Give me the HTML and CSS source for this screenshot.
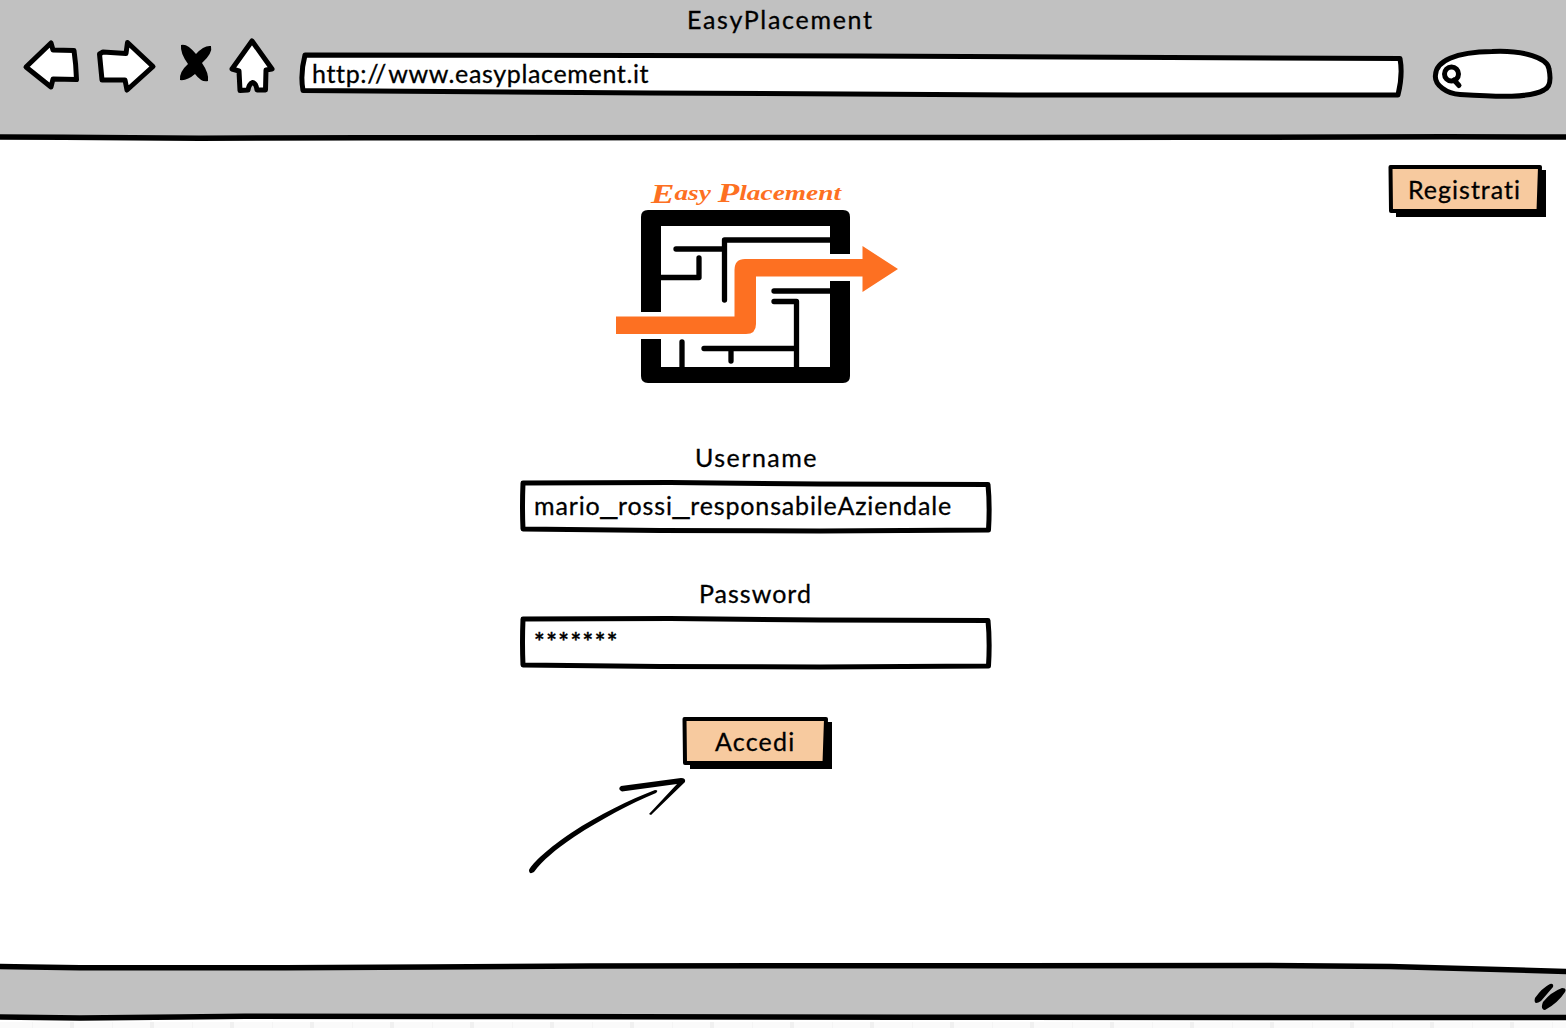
FILE: index.html
```html
<!DOCTYPE html>
<html lang="it">
<head>
<meta charset="utf-8">
<title>EasyPlacement</title>
<link rel="stylesheet" href="styles.css">
</head>
<body>
<div class="window">
  <header class="chrome">
    <div class="title"><span class="t-title">EasyPlacement</span></div>
    <div class="toolbar">
      <svg class="ink" width="68" height="64" viewBox="20 36 68 64"><path d="M26 67 51 43 53 50 74 50.5Q76 64 76.500 79.500L53 79 51 87Z"/></svg>
      <svg class="ink" width="80" height="64" viewBox="88 36 80 64"><path d="M103 52 126 53.500 127.500 42.500 153 66.500 127 90 125 80 102 80 99.500 54Z"/></svg>
      <svg width="52" height="64" viewBox="168 36 52 64"><path d="M181 45Q187 43 196 54Q204 45 211 46Q213 53 202 63Q209 73 208 81Q202 83 195 74Q187 81 180 80Q179 72 188 64Q180 53 181 45Z"/></svg>
      <svg class="ink" width="64" height="64" viewBox="220 36 64 64"><path d="M252 41 272 69 266 70 265.500 90 257 90Q256 83 252.500 82.500Q249 84 248 90L240 90.500 239 71 232 69Z"/></svg>
      <div class="address stack">
        <svg class="ink" width="1112" height="64" viewBox="292 36 1112 64"><path d="M305 55 860 56 1400 58.500Q1403 75 1398 95L1040 95 650 93 303 90.500Q300 74 305 55Z"/></svg>
        <span class="t-url">http:<b>//</b>www.easyplacement.it</span>
      </div>
      <svg class="ink search" width="126" height="64" viewBox="1430 36 126 64"><path d="M1435.500 75C1436 61 1455 52 1492 51.500C1524 50 1548 58 1549 69C1551 79 1551 87 1544 90C1530 98 1500 97 1460 94.500C1447 94 1434 85 1435.500 75Z"/><circle cx="1451.500" cy="74" r="7"/><path d="M1454 80 1459 85.500" fill="none"/></svg>
    </div>
    <svg class="rule" width="1566" height="8" viewBox="0 133 1566 8"><path d="M0 137 64 137.300 200 138.200 364 137.700 1000 137.500 1190 137.300 1446 136.800 1566 137"/></svg>
  </header>

  <main class="page">
    <section class="login">
      <svg class="logo" width="284" height="208" viewBox="615 178 284 208">
        <text class="brand" x="651" y="203" textLength="190" lengthAdjust="spacingAndGlyphs"><tspan class="initial">E</tspan><tspan dy="-3">asy </tspan><tspan class="initial" dy="2">P</tspan><tspan dy="-2">lacement</tspan></text>
        <path d="M648 210H843Q850 210 850 217V254H830V226H661V312H641V217Q641 210 648 210Z"/>
        <path d="M641 339H661V367H830V281H850V376Q850 383 843 383H648Q641 383 641 376Z"/>
        <g class="maze"><path d="M676 249H724M724.500 300V240H832M660 277.500H699V258M774 291H832M774 301.500H796.500V368M704 348.500H796M731 349V361M682 342V368"/></g>
        <path class="route" d="M616 316.500H734.500V270Q734.500 259 745 259H862.500V246L898 269 862.500 292V276.500H756V324Q756 334 746 334H616Z"/>
      </svg>
      <label class="label label-user"><span class="t-user">Username</span></label>
      <div class="field stack">
        <svg class="ink" width="472" height="54" viewBox="0 0 472 54"><path d="M3 3 150 2.500 300 4 468 4.500Q470 25 468.500 50L300 51 140 50.500 3 49Q2 27 3 3Z"/></svg>
        <span class="t-name">mario<i>_</i>rossi<i>_</i>responsabileAziendale</span>
      </div>
      <label class="label label-pass"><span class="t-pass">Password</span></label>
      <div class="field stack">
        <svg class="ink" width="472" height="54" viewBox="0 0 472 54"><path d="M3 3 150 2.500 300 4 468 4.500Q470 25 468.500 50L300 51 140 50.500 3 49Q2 27 3 3Z"/></svg>
        <span class="t-stars">*******</span>
      </div>
      <button class="button stack enter">
        <svg width="150" height="54" viewBox="0 0 150 54"><path d="M8 6H150V53H8Z"/><path class="face" d="M2.500 3 144 3 142.500 47 3 47Z"/></svg>
        <span class="t-enter">Accedi</span>
      </button>
      <svg class="pointer" width="164" height="104" viewBox="526 774 164 104">
        <path d="M529 870C533 862 549 848 571 833C600 814 629 800 655 790Q659 790 656 793C630 804 603 818 574 837C555 850 543 860 534 872Q529 875 529 870Z"/>
        <path d="M621 786 681 778Q686 778 685 782L651 815 649 814 677 784 622 791.500Q617 789 621 786Z"/>
      </svg>
    </section>
    <button class="button stack register">
      <svg width="158" height="54" viewBox="0 0 158 54"><path d="M8 6H158V53H8Z"/><path class="face" d="M2.500 3 152 3 150.500 47 3 47Z"/></svg>
      <span class="t-reg">Registrati</span>
    </button>
  </main>

  <footer class="status">
    <svg width="1566" height="60" viewBox="0 962 1566 60">
      <path class="bar" d="M-5 966.500 30 967 80 967.800 285 967.800 430 967 590 966 1270 965.500 1390 966.500 1570 971.500V1017.500L1400 1017.500 900 1017.300 445 1016.500 245 1016.200 180 1017 80 1018 -5 1017Z"/>
      <path d="M1550 984Q1554 983 1553 987L1541 1001Q1533 1006 1535 998Q1542 988 1550 984ZM1562 988Q1567 988 1565 992Q1558 1003 1545 1010Q1540 1009 1543 1002Q1551 992 1562 988Z"/>
    </svg>
    <div class="ruler"></div>
  </footer>
</div>
</body>
</html>
```
FILE: styles.css
```css
* { box-sizing: border-box; }
body { margin: 0; background: #fff; color: #000; font: 25px/30px Lato, sans-serif; overflow: hidden; -webkit-text-stroke: .3px #000; }
svg { display: block; flex: none; }
.window { width: 1566px; height: 1028px; display: flex; flex-direction: column; }
.stack { display: grid; }
.stack > * { grid-area: 1 / 1; }
.ink { fill: #fff; stroke: #000; stroke-width: 5; stroke-linejoin: round; stroke-linecap: round; }
.chrome { height: 141px; background: linear-gradient(#c1c1c1 138px, #fff 138px); display: flex; flex-direction: column; }
.title { height: 36px; padding: 4px 0 0 687px; white-space: nowrap; }
.toolbar { display: flex; height: 64px; padding-left: 20px; }
.address { margin-left: 8px; }
.address span { padding: 22px 0 0 20px; }
.search { margin-left: 26px; }
.rule { margin-top: 33px; fill: none; stroke: #000; stroke-width: 5.5; }
.page { height: 821px; display: grid; grid-template-columns: 520px 472px 1fr; }
.login { grid-column: 2; display: flex; flex-direction: column; padding-top: 37px; }
.logo { margin-left: 95px; }
.brand { font: italic bold 21px "Liberation Serif", serif; fill: #fd7022; -webkit-text-stroke: .5px #fd7022; }
.initial { font-size: 27px; }
.maze { fill: none; stroke: #000; stroke-width: 5.3; stroke-linejoin: round; stroke-linecap: round; }
.route { fill: #fd7022; }
.label { height: 94px; padding-top: 56px; }
.label-user { padding-left: 175px; }
.label-pass { height: 82px; padding: 44px 0 0 179px; }
.field { height: 54px; }
.field span { padding: 10px 0 0 14px; }
.field i { font: 30px/0 "Liberation Sans", sans-serif; vertical-align: 2px; }
.button { border: 0; padding: 0; background: none; font: inherit; color: inherit; text-align: left; height: 54px; }
.face { fill: #f7ca9f; stroke: #000; stroke-width: 4; stroke-linejoin: round; }
.enter { width: 150px; margin: 46px 0 0 162px; }
.enter span { padding: 10px 0 0 33px; }
.register { grid-column: 3; justify-self: end; width: 158px; margin: 23px 20px 0 0; }
.register span { padding: 10px 0 0 20px; }
.pointer { margin: 4px 0 0 6px; }
.status { height: 66px; }
.bar { fill: #c1c1c1; stroke: #000; stroke-width: 5.5; }
.ruler { height: 6px; background: repeating-linear-gradient(90deg, #fafafa 0 32px, #f4f4f4 32px 33px, #fafafa 33px 70px, #f0f0f0 70px 74px, #fafafa 74px 80px); }
.t-title { letter-spacing: 1.7px; }
.t-url { letter-spacing: .65px; }
.t-url b { font-weight: normal; letter-spacing: 2px; }
.t-user { letter-spacing: 1.5px; }
.t-name { letter-spacing: .85px; }
.t-pass { letter-spacing: 1px; }
.t-stars { font-weight: bold; letter-spacing: 1.5px; }
.t-enter { letter-spacing: 1.2px; }
.t-reg { letter-spacing: 1px; }
```
